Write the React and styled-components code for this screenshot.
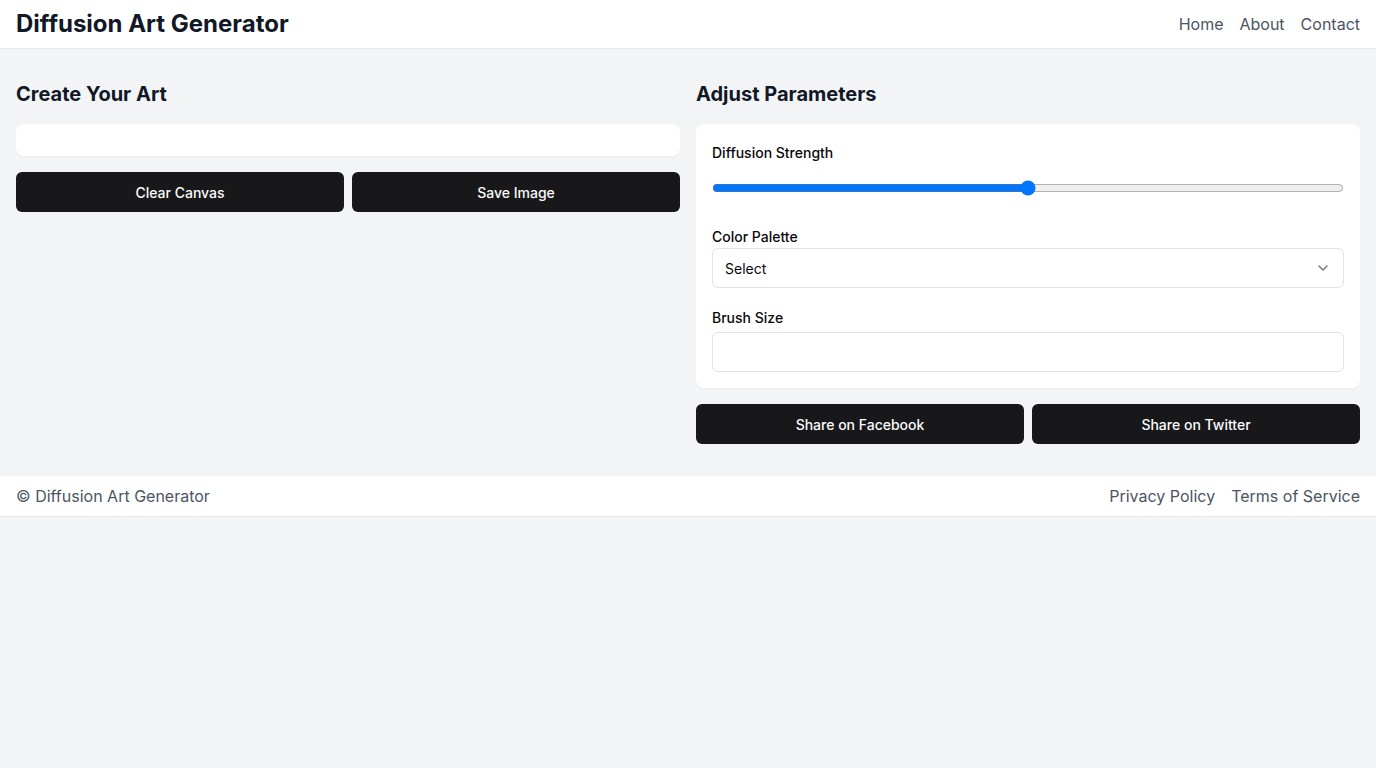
import styled, { createGlobalStyle } from "styled-components";

const GlobalStyle = createGlobalStyle`
  body {
    margin: 0;
    background: #f3f4f6;
    font-family: Inter, "Liberation Sans", sans-serif;
    color: #111827;
  }
  * {
    box-sizing: border-box;
  }
`;

const Header = styled.header`
  display: flex;
  align-items: center;
  justify-content: space-between;
  height: 49px;
  padding: 0 16px;
  background: #ffffff;
  border-bottom: 1px solid #e5e7eb;
`;

const Title = styled.h1`
  margin: 0;
  font-size: 24px;
  line-height: 32px;
  font-weight: 700;
  color: #111827;
`;

const Nav = styled.nav`
  display: flex;
  gap: 16px;
`;

const NavLink = styled.a`
  font-size: 16px;
  color: #4b5563;
  text-decoration: none;
`;

const Main = styled.main`
  display: grid;
  grid-template-columns: 1fr 1fr;
  gap: 16px;
  padding: 31px 16px 32px;
`;

const Column = styled.section`
  display: flex;
  flex-direction: column;
  gap: 16px;
`;

const Heading = styled.h2`
  margin: 0;
  font-size: 20px;
  line-height: 28px;
  font-weight: 700;
  color: #111827;
`;

const Canvas = styled.div`
  height: 32px;
  background: #ffffff;
  border-radius: 8px;
  box-shadow: 0 1px 2px rgba(0, 0, 0, 0.04);
`;

const ButtonRow = styled.div`
  display: grid;
  grid-template-columns: 1fr 1fr;
  gap: 8px;
`;

const Button = styled.button`
  height: 40px;
  border: none;
  border-radius: 6px;
  background: #18181b;
  color: #fafafa;
  font-family: Inter, "Liberation Sans", sans-serif;
  font-size: 14px;
  font-weight: 500;
  cursor: pointer;
`;

const Card = styled.div`
  display: flex;
  flex-direction: column;
  gap: 20px;
  padding: 16px;
  background: #ffffff;
  border-radius: 8px;
  box-shadow: 0 1px 2px rgba(0, 0, 0, 0.04);
`;

const Field = styled.div`
  display: flex;
  flex-direction: column;
  gap: ${(p) => p.$gap || 0}px;
`;

const Label = styled.label`
  font-size: 14px;
  line-height: 20px;
  font-weight: 500;
  color: #09090b;
  padding-top: ${(p) => p.$pad || 0}px;
`;

const Range = styled.input`
  width: 100%;
  margin: 5px 0 11px;
  accent-color: #0075ff;
`;

const SelectBox = styled.div`
  display: flex;
  align-items: center;
  justify-content: space-between;
  height: 40px;
  padding: 0 12px;
  border: 1px solid #e4e4e7;
  border-radius: 6px;
  background: #ffffff;
  font-size: 14px;
  color: #09090b;
`;

const TextInput = styled.input`
  height: 40px;
  width: 100%;
  padding: 0 12px;
  border: 1px solid #e4e4e7;
  border-radius: 6px;
  background: #ffffff;
  font-family: inherit;
  font-size: 14px;
  outline: none;
`;

const Footer = styled.footer`
  display: flex;
  align-items: center;
  justify-content: space-between;
  height: 41px;
  padding: 0 16px;
  background: #ffffff;
  border-bottom: 1px solid #e5e7eb;
  font-size: 16px;
  color: #4b5563;
`;

const FooterLinks = styled.div`
  display: flex;
  gap: 16px;
`;

const Chevron = () => (
  <svg width="16" height="16" viewBox="0 0 24 24" fill="none" stroke="#71717a" strokeWidth="2" strokeLinecap="round" strokeLinejoin="round">
    <path d="m6 9 6 6 6-6" />
  </svg>
);

export default function App() {
  return (
    <>
      <GlobalStyle />
      <Header>
        <Title>Diffusion Art Generator</Title>
        <Nav>
          <NavLink href="#">Home</NavLink>
          <NavLink href="#">About</NavLink>
          <NavLink href="#">Contact</NavLink>
        </Nav>
      </Header>
      <Main>
        <Column>
          <Heading>Create Your Art</Heading>
          <Canvas />
          <ButtonRow>
            <Button>Clear Canvas</Button>
            <Button>Save Image</Button>
          </ButtonRow>
        </Column>
        <Column>
          <Heading>Adjust Parameters</Heading>
          <Card>
            <Field $gap={12}>
              <Label $pad={3}>Diffusion Strength</Label>
              <Range type="range" min="0" max="100" defaultValue="50" />
            </Field>
            <Field $gap={1}>
              <Label>Color Palette</Label>
              <SelectBox>
                <span>Select</span>
                <Chevron />
              </SelectBox>
            </Field>
            <Field $gap={4}>
              <Label>Brush Size</Label>
              <TextInput type="text" />
            </Field>
          </Card>
          <ButtonRow>
            <Button>Share on Facebook</Button>
            <Button>Share on Twitter</Button>
          </ButtonRow>
        </Column>
      </Main>
      <Footer>
        <span>© Diffusion Art Generator</span>
        <FooterLinks>
          <NavLink href="#">Privacy Policy</NavLink>
          <NavLink href="#">Terms of Service</NavLink>
        </FooterLinks>
      </Footer>
    </>
  );
}
